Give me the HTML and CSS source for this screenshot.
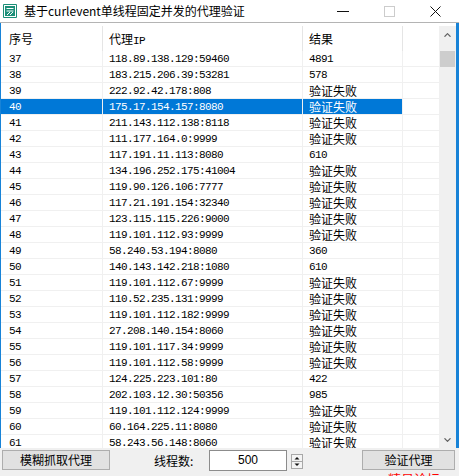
FILE: index.html
```html
<!DOCTYPE html>
<html lang="zh-CN">
<head>
<meta charset="utf-8">
<title>代理验证</title>
<link rel="stylesheet" href="styles.css">
</head>
<body>
<div class="window">
  <div class="titlebar">
    <svg class="appicon" viewBox="0 0 14 14" width="14" height="14">
      <rect width="14" height="14" rx="1" fill="#1c8f78"/>
      <rect x="1.5" y="1.5" width="11" height="11" fill="none" stroke="#fff" stroke-width="1"/>
      <path d="M3.5 4.5H10.5M3.5 7H10.5M4 11L7 8M7 11L10 8" stroke="#fff" stroke-width="1" fill="none"/>
    </svg>
    <span class="title">基于curlevent单线程固定并发的代理验证</span>
    <div class="caps">
      <div class="cap"><svg width="12" height="10" viewBox="0 0 12 10"><path d="M0 5.5H12" stroke="#111" stroke-width="1"/></svg></div>
      <div class="cap"><svg width="11" height="11" viewBox="0 0 11 11"><rect x="0.5" y="0.5" width="10" height="10" fill="none" stroke="#cccccc" stroke-width="1"/></svg></div>
      <div class="cap"><svg width="11" height="11" viewBox="0 0 11 11"><path d="M0.5 0.5L10.5 10.5M10.5 0.5L0.5 10.5" stroke="#111" stroke-width="1"/></svg></div>
    </div>
  </div>

  <div class="listwrap">
    <div class="lv">
      <div class="row head">
        <div class="c c1">序号</div>
        <div class="c c2">代理<span class="mono">IP</span></div>
        <div class="c c3">结果</div>
        <div class="c fill"></div>
      </div>
      <div class="row"><div class="c c1 mono">37</div><div class="c c2 mono">118.89.138.129:59460</div><div class="c c3 mono">4891</div><div class="c fill"></div></div>
      <div class="row"><div class="c c1 mono">38</div><div class="c c2 mono">183.215.206.39:53281</div><div class="c c3 mono">578</div><div class="c fill"></div></div>
      <div class="row"><div class="c c1 mono">39</div><div class="c c2 mono">222.92.42.178:808</div><div class="c c3">验证失败</div><div class="c fill"></div></div>
      <div class="row sel"><div class="c c1 mono">40</div><div class="c c2 mono">175.17.154.157:8080</div><div class="c c3">验证失败</div><div class="c fill"></div></div>
      <div class="row"><div class="c c1 mono">41</div><div class="c c2 mono">211.143.112.138:8118</div><div class="c c3">验证失败</div><div class="c fill"></div></div>
      <div class="row"><div class="c c1 mono">42</div><div class="c c2 mono">111.177.164.0:9999</div><div class="c c3">验证失败</div><div class="c fill"></div></div>
      <div class="row"><div class="c c1 mono">43</div><div class="c c2 mono">117.191.11.113:8080</div><div class="c c3 mono">610</div><div class="c fill"></div></div>
      <div class="row"><div class="c c1 mono">44</div><div class="c c2 mono">134.196.252.175:41004</div><div class="c c3">验证失败</div><div class="c fill"></div></div>
      <div class="row"><div class="c c1 mono">45</div><div class="c c2 mono">119.90.126.106:7777</div><div class="c c3">验证失败</div><div class="c fill"></div></div>
      <div class="row"><div class="c c1 mono">46</div><div class="c c2 mono">117.21.191.154:32340</div><div class="c c3">验证失败</div><div class="c fill"></div></div>
      <div class="row"><div class="c c1 mono">47</div><div class="c c2 mono">123.115.115.226:9000</div><div class="c c3">验证失败</div><div class="c fill"></div></div>
      <div class="row"><div class="c c1 mono">48</div><div class="c c2 mono">119.101.112.93:9999</div><div class="c c3">验证失败</div><div class="c fill"></div></div>
      <div class="row"><div class="c c1 mono">49</div><div class="c c2 mono">58.240.53.194:8080</div><div class="c c3 mono">360</div><div class="c fill"></div></div>
      <div class="row"><div class="c c1 mono">50</div><div class="c c2 mono">140.143.142.218:1080</div><div class="c c3 mono">610</div><div class="c fill"></div></div>
      <div class="row"><div class="c c1 mono">51</div><div class="c c2 mono">119.101.112.67:9999</div><div class="c c3">验证失败</div><div class="c fill"></div></div>
      <div class="row"><div class="c c1 mono">52</div><div class="c c2 mono">110.52.235.131:9999</div><div class="c c3">验证失败</div><div class="c fill"></div></div>
      <div class="row"><div class="c c1 mono">53</div><div class="c c2 mono">119.101.112.182:9999</div><div class="c c3">验证失败</div><div class="c fill"></div></div>
      <div class="row"><div class="c c1 mono">54</div><div class="c c2 mono">27.208.140.154:8060</div><div class="c c3">验证失败</div><div class="c fill"></div></div>
      <div class="row"><div class="c c1 mono">55</div><div class="c c2 mono">119.101.117.34:9999</div><div class="c c3">验证失败</div><div class="c fill"></div></div>
      <div class="row"><div class="c c1 mono">56</div><div class="c c2 mono">119.101.112.58:9999</div><div class="c c3">验证失败</div><div class="c fill"></div></div>
      <div class="row"><div class="c c1 mono">57</div><div class="c c2 mono">124.225.223.101:80</div><div class="c c3 mono">422</div><div class="c fill"></div></div>
      <div class="row"><div class="c c1 mono">58</div><div class="c c2 mono">202.103.12.30:50356</div><div class="c c3 mono">985</div><div class="c fill"></div></div>
      <div class="row"><div class="c c1 mono">59</div><div class="c c2 mono">119.101.112.124:9999</div><div class="c c3">验证失败</div><div class="c fill"></div></div>
      <div class="row"><div class="c c1 mono">60</div><div class="c c2 mono">60.164.225.11:8080</div><div class="c c3">验证失败</div><div class="c fill"></div></div>
      <div class="row"><div class="c c1 mono">61</div><div class="c c2 mono">58.243.56.148:8060</div><div class="c c3">验证失败</div><div class="c fill"></div></div>
    </div>
    <div class="vscroll">
      <div class="sbtn"><svg width="7" height="4" viewBox="0 0 7 4"><path d="M0.5 3.7L3.5 0.7L6.5 3.7" fill="none" stroke="#606060" stroke-width="1.2"/></svg></div>
      <div class="track"><div class="thumb"></div></div>
      <div class="sbtn"><svg width="7" height="4" viewBox="0 0 7 4"><path d="M0.5 0.3L3.5 3.3L6.5 0.3" fill="none" stroke="#606060" stroke-width="1.2"/></svg></div>
    </div>
  </div>

  <div class="bottombar">
    <div class="btn btn1">模糊抓取代理</div>
    <div class="label">线程数:</div>
    <div class="num">500</div>
    <svg class="spin" width="12" height="15" viewBox="0 0 12 15">
      <rect x="0.5" y="0.5" width="11" height="14" fill="#f4f4f4" stroke="#a8a8a8"/>
      <path d="M1 7.5H11" stroke="#a8a8a8" stroke-width="1"/>
      <path d="M3.5 5.5L6 3L8.5 5.5Z" fill="#111"/>
      <path d="M3.5 9.5L6 12L8.5 9.5Z" fill="#111"/>
    </svg>
    <div class="right">
      <div class="btn btn2">验证代理</div>
      <div class="red">精易论坛</div>
    </div>
  </div>
</div>
</body>
</html>
```

FILE: styles.css
```css
* {
  box-sizing: border-box;
  margin: 0;
  padding: 0;
}

body {
  width: 459px;
  height: 476px;
  overflow: hidden;
  background: #fff;
  font-family: "Noto Sans CJK SC", sans-serif;
  font-size: 12px;
  color: #000;
}

.window {
  display: flex;
  flex-direction: column;
  height: 476px;
}

.titlebar {
  height: 23px;
  flex: none;
  display: flex;
  align-items: center;
  border-bottom: 1px solid #b4b4b4;
  background: #fff;
}

.appicon {
  flex: none;
  margin-left: 3px;
  margin-right: 7px;
}

.title {
  flex: 1;
  white-space: nowrap;
  line-height: 22px;
  font-size: 12px;
}

.caps {
  display: flex;
  align-self: stretch;
  margin-right: 1px;
}

.cap {
  width: 46px;
  display: flex;
  align-items: center;
  justify-content: center;
}

.listwrap {
  height: 425px;
  flex: none;
  padding-top: 3px;
  display: flex;
  border-left: 1px solid #1883d7;
  border-right: 3px solid #1883d7;
  background: #fff;
}

.lv {
  flex: 1;
  overflow: hidden;
}

.row {
  display: flex;
  height: 16px;
}

.c {
  flex: none;
  height: 100%;
  padding-left: 6px;
  line-height: 15px;
  white-space: nowrap;
  border-right: 1px solid #f0f0f0;
  border-bottom: 1px solid #f0f0f0;
}

.c1 { width: 102px; padding-left: 8px; }
.c2 { width: 200px; }
.c3 { width: 100px; }
.fill { flex: 1; border-right: none; }

.mono {
  font-family: "Liberation Mono", monospace;
  font-size: 11px;
  letter-spacing: -0.6px;
  line-height: 16px;
}

.head {
  height: 25px;
}

.head .c {
  line-height: 25px;
  border-bottom: none;
  border-right-color: #e5e5e5;
}

.head .mono {
  line-height: 1;
}

.head .fill { border-right: none; }

.sel .c1,
.sel .c2,
.sel .c3 {
  background: #0078d7;
  color: #fff;
}

.vscroll {
  width: 17px;
  flex: none;
  display: flex;
  flex-direction: column;
  background: #f0f0f0;
}

.sbtn {
  height: 17px;
  flex: none;
  display: flex;
  align-items: center;
  justify-content: center;
}

.track {
  flex: 1;
  padding: 8px 1px 0;
}

.thumb {
  height: 16px;
  background: #cdcdcd;
}

.bottombar {
  height: 28px;
  flex: none;
  display: flex;
  align-items: flex-start;
  padding-top: 2px;
  background: #f0f0f0;
  overflow: hidden;
}

.btn {
  height: 20px;
  border: 1px solid #adadad;
  background: #e1e1e1;
  text-align: center;
  line-height: 18px;
  font-size: 12px;
}

.btn1 {
  width: 108px;
  margin-left: 2px;
}

.label {
  width: 55px;
  margin-left: 44px;
  line-height: 21px;
}

.num {
  width: 78px;
  height: 21px;
  border: 1px solid #8c8c8c;
  background: #fff;
  text-align: center;
  line-height: 19px;
  font-family: "Liberation Sans", sans-serif;
  font-size: 12px;
}

.spin {
  margin-left: 4px;
  margin-top: 4px;
}

.right {
  margin-left: auto;
  margin-right: 4px;
  display: flex;
  flex-direction: column;
}

.btn2 {
  width: 93px;
}

.red {
  margin-top: 2px;
  padding-left: 11px;
  text-align: center;
  color: #f00;
  font-size: 13px;
  line-height: 13px;
}
```
